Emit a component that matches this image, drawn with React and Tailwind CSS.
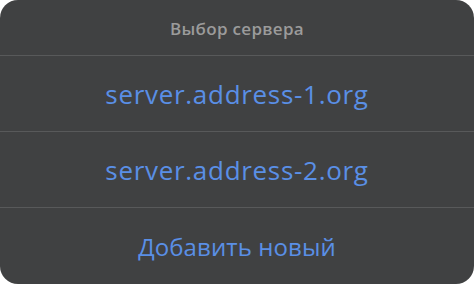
export default function App() {
  const font = { fontFamily: '"Open Sans", "Noto Sans", sans-serif' };
  return (
    <div className="w-[476px] h-[284px] bg-white" style={font}>
      <div className="w-[474px] h-[284px] bg-[#404142] rounded-[18px] overflow-hidden flex flex-col">
        <div className="h-[56px] flex items-center justify-center text-[17px] tracking-[0.3px] font-semibold text-[#9b9b9b] border-b border-[#58595a] pt-[2px]">
          Выбор сервера
        </div>
        <div className="h-[76px] flex items-center justify-center text-[26px] tracking-[0.7px] text-[#5a8fe6] border-b border-[#58595a] pt-[2px]">
          server.address-1.org
        </div>
        <div className="h-[76px] flex items-center justify-center text-[26px] tracking-[0.7px] text-[#5a8fe6] border-b border-[#58595a] pt-[2px]">
          server.address-2.org
        </div>
        <div className="h-[76px] flex items-center justify-center text-[24px] tracking-[0.1px] text-[#5a8fe6] pt-[2px]">
          Добавить новый
        </div>
      </div>
    </div>
  );
}
